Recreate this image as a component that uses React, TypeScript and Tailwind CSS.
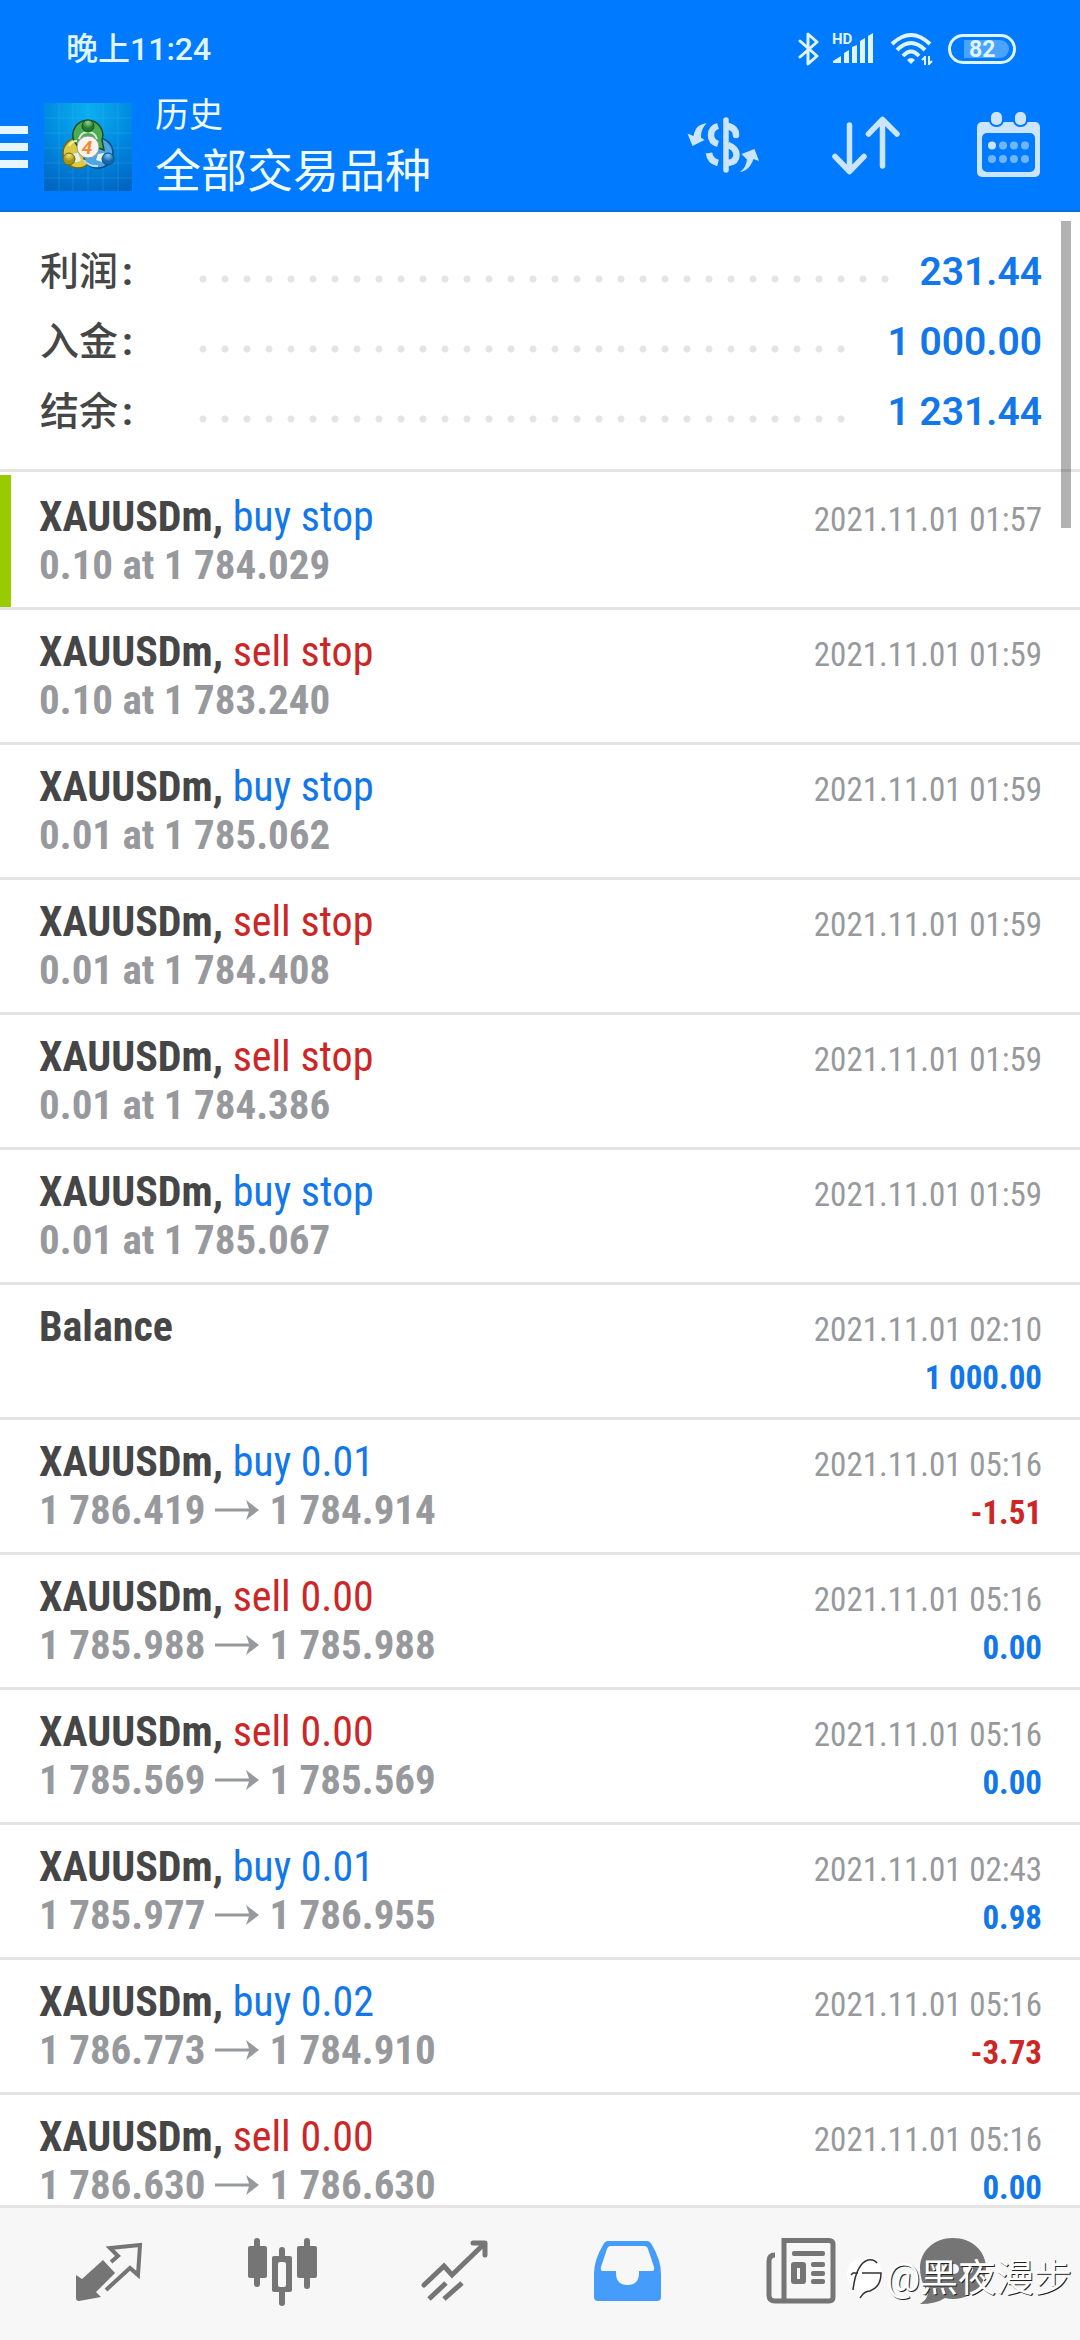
import type { ReactNode } from "react";

type Row = {
  title: string;
  side?: "buy" | "sell";
  action?: string;
  from?: string;
  to?: string;
  time: string;
  profit?: string;
};

const summary = [
  { label: "利润", value: "231.44" },
  { label: "入金", value: "1 000.00" },
  { label: "结余", value: "1 231.44" },
];

const rows: Row[] = [
  { title: "XAUUSDm,", side: "buy", action: "buy stop", from: "0.10 at 1 784.029", time: "2021.11.01 01:57" },
  { title: "XAUUSDm,", side: "sell", action: "sell stop", from: "0.10 at 1 783.240", time: "2021.11.01 01:59" },
  { title: "XAUUSDm,", side: "buy", action: "buy stop", from: "0.01 at 1 785.062", time: "2021.11.01 01:59" },
  { title: "XAUUSDm,", side: "sell", action: "sell stop", from: "0.01 at 1 784.408", time: "2021.11.01 01:59" },
  { title: "XAUUSDm,", side: "sell", action: "sell stop", from: "0.01 at 1 784.386", time: "2021.11.01 01:59" },
  { title: "XAUUSDm,", side: "buy", action: "buy stop", from: "0.01 at 1 785.067", time: "2021.11.01 01:59" },
  { title: "Balance", time: "2021.11.01 02:10", profit: "1 000.00" },
  { title: "XAUUSDm,", side: "buy", action: "buy 0.01", from: "1 786.419", to: "1 784.914", time: "2021.11.01 05:16", profit: "-1.51" },
  { title: "XAUUSDm,", side: "sell", action: "sell 0.00", from: "1 785.988", to: "1 785.988", time: "2021.11.01 05:16", profit: "0.00" },
  { title: "XAUUSDm,", side: "sell", action: "sell 0.00", from: "1 785.569", to: "1 785.569", time: "2021.11.01 05:16", profit: "0.00" },
  { title: "XAUUSDm,", side: "buy", action: "buy 0.01", from: "1 785.977", to: "1 786.955", time: "2021.11.01 02:43", profit: "0.98" },
  { title: "XAUUSDm,", side: "buy", action: "buy 0.02", from: "1 786.773", to: "1 784.910", time: "2021.11.01 05:16", profit: "-3.73" },
  { title: "XAUUSDm,", side: "sell", action: "sell 0.00", from: "1 786.630", to: "1 786.630", time: "2021.11.01 05:16", profit: "0.00" },
];

function StatusBar() {
  return (
    <div className="flex h-[90px] items-center justify-between pt-2 pr-16 pl-[66px] text-[#dff4ff]">
      <span className="text-[32px] font-medium">晚上11:24</span>
      <div className="flex items-center">
        <svg viewBox="0 0 22 34" className="mr-3 h-[34px] w-[22px]" fill="none" stroke="currentColor" strokeWidth="3" strokeLinejoin="round" strokeLinecap="round">
          <path d="M2 9l17 15-9 8V2l9 8L2 25" />
        </svg>
        <svg viewBox="0 0 42 34" className="mr-4 h-[34px] w-[42px] overflow-visible" fill="currentColor">
          <text x="0" y="12" fontSize="15" fontWeight="700">HD</text>
          <path d="M1 31v-2l8-5v7zM12 31V21l5-3v13zM20 31V15l5-2v18zM28 31V9l5-3v25zM36 31V4l5-3v30z" />
        </svg>
        <svg viewBox="0 0 44 34" className="mr-[14px] h-[34px] w-[44px]" fill="none" stroke="currentColor" strokeWidth="4">
          <path d="M2 12Q21-6 40 12M7 18Q21 4 35 18M13 24Q21 15 29 24" />
          <path d="M17 28q4-4 8 0l-4 4z" fill="currentColor" stroke="none" />
          <path d="M35 24v9M39 33v-9M32 28l3-3M42 29l-3 3" strokeWidth="2" />
        </svg>
        <div className="flex h-[30px] w-[68px] items-center rounded-full border-3 border-current px-1">
          <div className="ml-[9px] flex h-[18px] flex-1 items-center rounded-r-full bg-[#4aa3ff] pl-[5px] text-[23px] leading-none font-bold">
            82
          </div>
        </div>
      </div>
    </div>
  );
}

function AppLogo() {
  return (
    <svg viewBox="0 0 88 88" className="h-[88px] w-[88px]" aria-hidden="true">
      <defs>
        <radialGradient id="sky" cx="50%" cy="8%" r="100%">
          <stop offset="0" stopColor="#0bb0f0" />
          <stop offset="0.5" stopColor="#008ae0" />
          <stop offset="1" stopColor="#0064c2" />
        </radialGradient>
        <radialGradient id="green" cy="20%">
          <stop offset="0" stopColor="#9ad48a" />
          <stop offset="1" stopColor="#1d7a2c" />
        </radialGradient>
        <radialGradient id="gold" cy="20%">
          <stop offset="0" stopColor="#f1e46b" />
          <stop offset="1" stopColor="#a59312" />
        </radialGradient>
        <radialGradient id="blue" cy="20%">
          <stop offset="0" stopColor="#8ccdf5" />
          <stop offset="1" stopColor="#1468b0" />
        </radialGradient>
      </defs>
      <rect width="88" height="88" fill="url(#sky)" />
      <path d="M15 0v88M29 0v88M44 0v88M59 0v88M74 0v88M0 15h88M0 30h88M0 45h88M0 60h88M0 75h88" stroke="#5fc4f5" strokeOpacity="0.22" />
      <circle cx="34" cy="50" r="15" fill="#dccb42" stroke="#6f6a1c" strokeWidth="1.500" />
      <circle cx="54" cy="50" r="15" fill="#4da6e2" stroke="#0d4c86" strokeWidth="1.500" />
      <path d="M30 38a15 15 0 1 1 28-1l2 10-8-3-18 0z" fill="#4dab54" stroke="#164f2c" strokeWidth="1.500" />
      <path d="M35 36q2-7 9-7t9 7" fill="none" stroke="#d6ecd0" strokeWidth="2" />
      <path d="M25 43q3-5 8-5" fill="none" stroke="#f6efa0" strokeWidth="2" />
      <path d="M40 57q5 7 14 6" fill="none" stroke="#b4ddf8" strokeWidth="2" />
      <path d="M27 51l7-1 3 7q-4 3-6 2zM60 50l-6 1-2 6 6 2z" fill="#e9f2ea" />
      <circle cx="44" cy="23" r="6" fill="url(#green)" stroke="#164f2c" />
      <circle cx="25" cy="56" r="6" fill="url(#gold)" stroke="#6f6a1c" />
      <circle cx="64" cy="56" r="6" fill="url(#blue)" stroke="#0d4c86" />
      <circle cx="44" cy="44" r="11" fill="#f8f3ee" stroke="#8b9aa0" />
      <text x="43" y="51" textAnchor="middle" fontSize="19" fontWeight="700" fontStyle="italic" fill="#f28a30">4</text>
    </svg>
  );
}

function Toolbar() {
  return (
    <div className="flex h-[122px] items-center border-b-2 border-[#0b6ddd] pr-[35px] pb-[6px] text-[#cce5ff]">
      <button aria-label="Menu" className="mr-4">
        <svg viewBox="0 0 28 42" className="h-[42px] w-[28px]" fill="#e6f6ff">
          <path d="M0 0h28v8H0zM0 17h28v8H0zM0 34h28v8H0z" />
        </svg>
      </button>
      <AppLogo />
      <div className="ml-[23px] flex-1 text-[#effaff]">
        <p className="text-[34px] leading-[48px]">历史</p>
        <h1 className="text-[46px] leading-[64px]">全部交易品种</h1>
      </div>
      <div className="flex gap-[71px]">
        <button aria-label="Symbols">
          <svg viewBox="686 111 72 72" className="size-[72px]" fill="none" stroke="currentColor" strokeWidth="6.500">
            <path d="M725 120v50" strokeWidth="5.500" strokeLinecap="round" />
            <path d="M717 126q-7 2-7 9t7 9M708 153q1 8 9 10" />
            <path d="M727 126q8 2 8 9" strokeLinecap="round" />
            <path d="M727 145q8.500 3 8.500 10t-8.500 8" />
            <path stroke="none" fill="currentColor" d="M705.700 123.300C698 124 694 128 692.500 136L686.500 133.500 691.500 146 703.500 140 700 137.500C700 131 702 127 705.700 123.300zM739 172C744 168 745 165 746 159.500L740.500 154 753.500 149 758 161 752.500 159C750 166 746 171 739 172z" />
          </svg>
        </button>
        <button aria-label="Sort">
          <svg viewBox="829 111 72 72" className="size-[72px]" fill="none" stroke="currentColor" strokeWidth="5.500" strokeLinecap="round" strokeLinejoin="round">
            <path d="M848.500 125v46M834 156.500l14.500 15 14.500-15M881.500 166v-46M867.500 134l14-14.500 14.500 14.500" />
          </svg>
        </button>
        <button aria-label="Period">
          <svg viewBox="973 111 72 72" className="size-[72px]" fill="currentColor">
            <rect x="977" y="122" width="63" height="55" rx="5" />
            <rect x="982" y="133" width="53" height="39" rx="5" fill="#007bff" />
            <g stroke="#007bff" strokeWidth="4" paintOrder="stroke">
              <rect x="991" y="112" width="11" height="13" rx="5" />
              <rect x="1015" y="112" width="11" height="13" rx="5" />
            </g>
            <circle cx="992" cy="145.500" r="4" />
            <g opacity="0.550">
              <circle cx="1003" cy="145.500" r="4" />
              <circle cx="1014" cy="145.500" r="4" />
              <circle cx="1025" cy="145.500" r="4" />
              <circle cx="992" cy="159" r="4" />
              <circle cx="1003" cy="159" r="4" />
              <circle cx="1014" cy="159" r="4" />
              <circle cx="1025" cy="159" r="4" />
            </g>
          </svg>
        </button>
      </div>
    </div>
  );
}

function Summary() {
  return (
    <dl className="border-b-3 border-[#e4e4e4] pt-[25px] pr-[38px] pb-[22px] pl-10 text-[39px] leading-[70px] font-medium">
      {summary.map((item) => (
        <div key={item.label} className="flex items-center">
          <dt className="w-[152px] text-[#464646]">
            {item.label}
            <span className="ml-1 font-bold">:</span>
          </dt>
          <div className="mt-[14px] mr-[29px] h-2 flex-1 bg-[radial-gradient(circle,#e4e4e4_3px,transparent_4px)] bg-[length:22px_8px]" />
          <dd className="font-semibold text-[#1177ea]">{item.value}</dd>
        </div>
      ))}
    </dl>
  );
}

function HistoryRow({ row, active }: { row: Row; active: boolean }) {
  return (
    <li className={active ? "border-b-3 border-[#e4e4e4] bg-linear-to-r from-[#99cc00] from-[11px] to-transparent to-[11px]" : "border-b-3 border-[#e4e4e4]"}>
      <div className="flex h-[132px] items-baseline justify-between pt-[18px] pr-[38px] pl-[39px] font-['Roboto_Condensed','Liberation_Sans_Narrow',Roboto,sans-serif] leading-[48px] whitespace-nowrap">
        <div>
          <p className="text-[42px]">
            <span className="font-bold text-[#464646]">{row.title}</span>{" "}
            <span className={row.side === "sell" ? "text-[#cc2626]" : "text-[#1177ea]"}>{row.action}</span>
          </p>
          <p className="flex items-center text-[41px] font-bold text-[#97999d]">
            {row.from}
            {row.to && (
              <>
                <svg viewBox="0 0 44 20" className="mx-[10px] h-5 w-11" fill="currentColor">
                  <path d="M0 8.500h34L31 0 44 10 31 20l3-8.500H0z" />
                </svg>
                {row.to}
              </>
            )}
          </p>
        </div>
        <div className="text-right text-[33px]">
          <p className="text-[#97999d]">{row.time}</p>
          <p className={row.profit?.startsWith("-") ? "font-bold text-[#cc2626]" : "font-bold text-[#1177ea]"}>{row.profit}</p>
        </div>
      </div>
    </li>
  );
}

function NavButton({ label, viewBox, children }: { label: string; viewBox: string; children: ReactNode }) {
  return (
    <button aria-label={label} className="flex justify-center">
      <svg viewBox={viewBox} className="size-[72px]" fill="#757575">
        {children}
      </svg>
    </button>
  );
}

function BottomNav() {
  return (
    <nav className="relative grid h-[135px] shrink-0 grid-cols-[repeat(5,4fr)_3fr] items-start border-t-3 border-[#e4e4e4] bg-[#f7f7f7] pt-[27px] pr-[62px] pl-[22px]">
      <NavButton label="Quotes" viewBox="73 55 72 72">
        <path d="M76 95l6 4 21-19 12 13-19 19 5 5-22 4q-3 0-3-3z" />
        <path d="M111 82l7-6-8-8 30-3-2 30-8-7-24 22" fill="none" stroke="#757575" strokeWidth="4" />
      </NavButton>
      <NavButton label="Charts" viewBox="245 55 72 72">
        <rect x="247" y="66" width="19" height="32" rx="2" />
        <rect x="253" y="58" width="6" height="49" rx="3" />
        <rect x="296" y="66" width="20" height="32" rx="2" />
        <rect x="303" y="58" width="6" height="51" rx="3" />
        <rect x="278" y="67" width="6" height="59" rx="3" />
        <rect x="271" y="76" width="20" height="36" rx="2" />
        <rect x="277" y="82" width="8" height="25" rx="2" fill="#f7f7f7" />
      </NavButton>
      <NavButton label="Trade" viewBox="59 55 72 72">
        <g fill="none" stroke="#757575" strokeWidth="5">
          <path d="M64 105l20-19 8 9 32-31" strokeLinecap="round" />
          <path d="M113 63h12v12" strokeLinecap="round" strokeLinejoin="round" />
          <path d="M69 119l17-16M84 119l18-16" />
        </g>
      </NavButton>
      <NavButton label="History" viewBox="232 55 72 72">
        <path d="M248 61h39q3 0 5 4 9 15 9 29v23q0 4-4 4h-59q-4 0-4-4V94q0-14 9-29 2-4 5-4z" fill="#459cfb" />
        <path d="M251 66h33q3 0 4 3l6 18q1 4-2 4h-13v2q0 12-11.500 12T256 93v-2h-13q-3 0-2-4l6-18q1-3 4-3z" fill="#f7f7f7" />
      </NavButton>
      <NavButton label="News" viewBox="45 55 72 72">
        <path d="M55 75q-6 0-6 6v34q0 6 6 6h9V60.500h45q4 0 4 4V117q0 4-4 4H63" fill="none" stroke="#757575" strokeWidth="5" />
        <rect x="72" y="71" width="33" height="5" rx="2" />
        <path fillRule="evenodd" d="M74 82h9q3 0 3 3v16q0 3-3 3h-9q-3 0-3-3V85q0-3 3-3zm3 6v11h3V88z" />
        <rect x="91" y="82" width="14" height="5" rx="2" />
        <rect x="91" y="91" width="14" height="5" rx="2" />
        <rect x="91" y="99" width="14" height="5" rx="2" />
      </NavButton>
      <NavButton label="Chat" viewBox="197 55 72 72">
        <path d="M233 58c19 0 33 13 33 30s-14 31-33 31q-4 0-8-1-9 6-25 6 8-5 8-12-8-10-8-24c0-17 14-30 33-30z" />
        <circle cx="220" cy="89" r="5" fill="#f7f7f7" />
        <circle cx="234" cy="89" r="5" fill="#f7f7f7" />
        <circle cx="248" cy="89" r="5" fill="#f7f7f7" />
      </NavButton>
      <div className="absolute top-[46px] right-2 flex items-center text-[38px] leading-[48px] text-white [text-shadow:1px_1px_0_#222]">
        <svg viewBox="0 0 38 44" className="mr-[2px] h-11 w-[38px]" fill="none">
          <path d="M18 2C8 2 1 9 1 18q0 9 9 14l4 9q3-6 9-8 13-5 13-16C36 8 28 2 18 2z" fill="#fff" />
          <path d="M5 19l2-2h5M7 34Q10 8 22 4q6-1 9 3M16 17h19q0 14-11 18-6 0-10 7" stroke="#333" strokeWidth="1.500" />
        </svg>
        @黑夜漫步
      </div>
    </nav>
  );
}

export default function App() {
  return (
    <div className="relative flex h-screen flex-col bg-white font-[Roboto,'Noto_Sans_CJK_SC',sans-serif]">
      <header className="shrink-0 bg-[#007bff]">
        <StatusBar />
        <Toolbar />
      </header>
      <main className="relative min-h-0 flex-1 overflow-hidden">
        <Summary />
        <ul className="pt-[3px]">
          {rows.map((row, i) => (
            <HistoryRow key={i} row={row} active={i === 0} />
          ))}
        </ul>
        <div className="absolute top-[9px] right-[9px] h-[307px] w-[10px] bg-black/30" />
      </main>
      <BottomNav />
    </div>
  );
}
